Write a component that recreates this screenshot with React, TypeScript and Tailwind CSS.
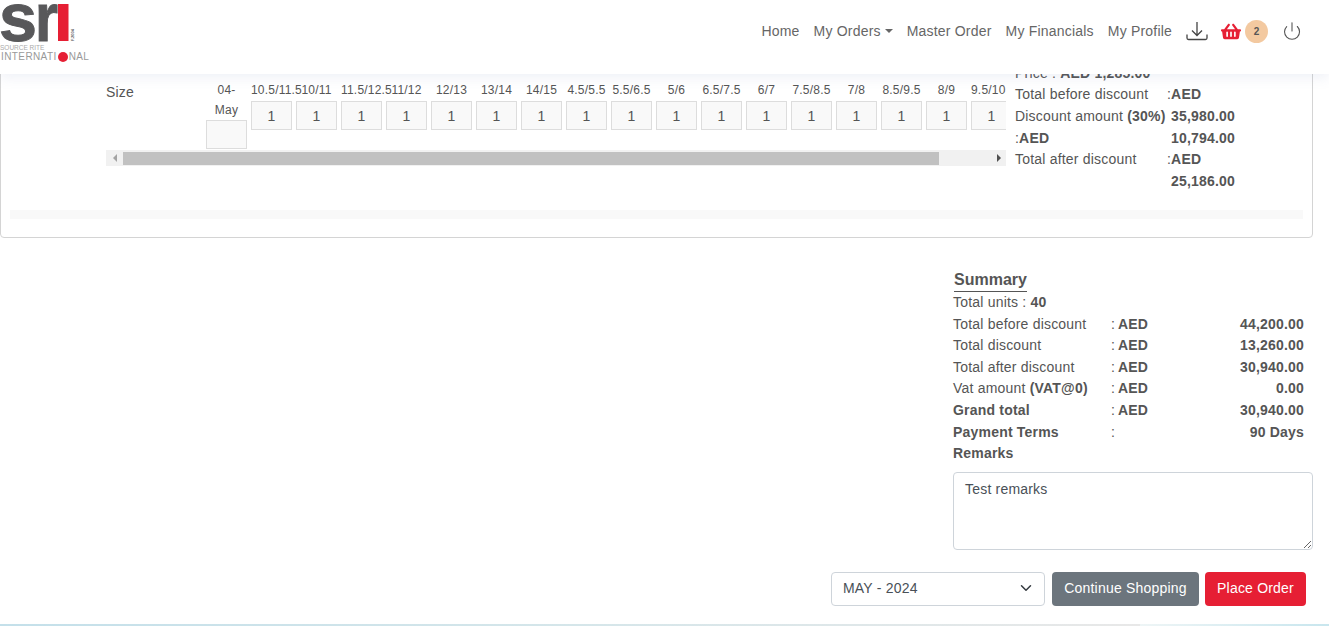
import React from "react";
import { Power } from "lucide-react";
import { FaShoppingBasket } from "react-icons/fa";

const sizes = [
  "04-May",
  "10.5/11.5",
  "10/11",
  "11.5/12.5",
  "11/12",
  "12/13",
  "13/14",
  "14/15",
  "4.5/5.5",
  "5.5/6.5",
  "5/6",
  "6.5/7.5",
  "6/7",
  "7.5/8.5",
  "7/8",
  "8.5/9.5",
  "8/9",
  "9.5/10.5",
];

const summaryRows = [
  { label: "Total before discount", value: "44,200.00" },
  { label: "Total discount", value: "13,260.00" },
  { label: "Total after discount", value: "30,940.00" },
  { label: "Vat amount", extra: "(VAT@0)", value: "0.00" },
  { label: "Grand total", value: "30,940.00", bold: true },
];

const Logo = () => (
  <div className="relative w-[92px] h-[64px] mt-[-1px] self-start tracking-normal">
    <svg width="92" height="44" viewBox="0 0 92 44" className="block">
      <text
        x="-1"
        y="42"
        fontFamily="'Liberation Sans', sans-serif"
        fontWeight="700"
        fontSize="68"
        textLength="38"
        lengthAdjust="spacingAndGlyphs"
        fill="#58585a"
        stroke="#58585a"
        strokeWidth="1"
      >
        s
      </text>
      <text
        x="35"
        y="42"
        fontFamily="'Liberation Sans', sans-serif"
        fontWeight="700"
        fontSize="68"
        textLength="23"
        lengthAdjust="spacingAndGlyphs"
        fill="#58585a"
        stroke="#58585a"
        strokeWidth="1"
      >
        r
      </text>
      <rect x="58" y="5" width="10.5" height="37" fill="#e61f34" />
      <text
        x="0"
        y="0"
        transform="translate(73.5 42) rotate(-90)"
        fontFamily="'Liberation Sans', sans-serif"
        fontWeight="700"
        fontSize="4"
        fill="#58585a"
      >
        F.2004
      </text>
    </svg>
    <div className="absolute left-0 top-[45px] text-[6.5px] leading-[8px] text-[#aaa] whitespace-nowrap">SOURCE RITE</div>
    <div className="absolute left-[1px] top-[52px] flex items-center text-[10px] leading-[12px] tracking-[0.4px] text-[#999] whitespace-nowrap">
      INTERNATI
      <span className="w-[10px] h-[10px] rounded-full bg-[#e61f34] mx-[1px]" />
      NAL
    </div>
  </div>
);

const NavBar = () => (
  <header className="relative z-10 h-[74px] bg-white flex items-center justify-between pr-[27px] shadow-[0_4px_12px_rgba(120,140,190,0.12)]">
    <Logo />
    <nav className="flex items-center text-[14px] text-[#666] -mt-[12px]">
      <a className="mr-[14px]">Home</a>
      <a className="mr-[14px] flex items-center">
        My Orders
        <span className="ml-[4px] w-0 h-0 border-x-[4px] border-t-[4px] border-x-transparent border-t-[#666]" />
      </a>
      <a className="mr-[14px]">Master Order</a>
      <a className="mr-[14px]">My Financials</a>
      <a className="mr-[14px]">My Profile</a>
      <svg width="22" height="20" viewBox="0 0 22 20" fill="none" stroke="#444" strokeWidth="1.3" className="mr-[13px]">
        <path d="M11 1v13M6 9.5l5 5 5-5" />
        <path d="M1 13.5v3.5a1.5 1.5 0 0 0 1.5 1.5h17a1.5 1.5 0 0 0 1.5-1.5v-3.5" />
      </svg>
      <FaShoppingBasket className="w-[20px] h-[19px] text-[#e61f34]" />
      <span className="ml-[4px] w-[23px] h-[23px] rounded-full bg-[#f3c9a0] text-[#555] text-[10px] font-bold flex items-center justify-center tracking-normal">
        2
      </span>
      <Power className="ml-[14px] w-[20px] h-[20px] text-[#555]" strokeWidth={1.3} />
    </nav>
  </header>
);

const SizeColumn = ({ size }: { size: string }) => (
  <div className="w-[41px] shrink-0 text-center text-[12px] leading-[19px]">
    {size === "04-May" ? (
      <div className="h-[38px]">
        04-
        <div className="pt-[1px]">May</div>
      </div>
    ) : (
      <div className="whitespace-nowrap">{size}</div>
    )}
    <input
      defaultValue={size === "04-May" ? "" : "1"}
      className="block w-[41px] h-[29px] mt-[1px] border border-[#ddd] bg-[#f9f9f9] text-center text-[14px] text-[#555]"
    />
  </div>
);

const FakeScrollbar = () => (
  <div className="h-[16px] bg-[#f1f1f1] flex items-center">
    <div className="w-[17px] flex justify-center">
      <span className="w-0 h-0 border-y-[4px] border-r-[4px] border-y-transparent border-r-[#a3a3a3]" />
    </div>
    <div className="w-[816px] h-[13px] bg-[#c1c1c1]" />
    <div className="flex-1 flex justify-end pr-[5px]">
      <span className="w-0 h-0 border-y-[4px] border-l-[4px] border-y-transparent border-l-[#505050]" />
    </div>
  </div>
);

const OrderTotals = () => (
  <div className="w-[290px] pl-[9px] leading-[21.6px] -mt-[18.4px] grid grid-cols-[152px_1fr]">
    <div className="col-span-2">
      Price : <b>AED 1,285.00</b>
    </div>
    <div>Total before discount</div>
    <div>
      :<b>AED</b>
    </div>
    <div className="whitespace-nowrap">
      Discount amount <b>(30%)</b>
    </div>
    <div className="pl-[4px]">
      <b>35,980.00</b>
    </div>
    <div className="h-[21.6px] leading-[23.6px]">
      :<b>AED</b>
    </div>
    <div className="h-[21.6px] leading-[23.6px] pl-[4px]">
      <b>10,794.00</b>
    </div>
    <div>Total after discount</div>
    <div>
      :<b>AED</b>
    </div>
    <div />
    <div className="pl-[4px]">
      <b>25,186.00</b>
    </div>
  </div>
);

const OrderCard = () => (
  <section className="relative -mt-[14px] w-[1313px] h-[178px] border border-[#d4d4d4] rounded-[4px] bg-white">
    <div className="flex pt-[20px] pl-[105px]">
      <div className="w-[900px] shrink-0">
        <div className="flex h-[69px]">
          <div className="w-[100px] shrink-0 leading-[21px] pt-[1px]">Size</div>
          <div className="flex gap-[4px] overflow-hidden">
            {sizes.map((s) => (
              <SizeColumn key={s} size={s} />
            ))}
          </div>
        </div>
        <FakeScrollbar />
      </div>
      <OrderTotals />
    </div>
    <div className="absolute left-[9px] right-[9px] top-[149px] h-[9px] bg-[#f9f9f9]" />
  </section>
);

const Summary = () => (
  <div className="ml-auto mr-[16px] mt-[31px] w-[360px] leading-[21.6px]">
    <div className="pl-[1px] h-[23px]">
      <h2 className="inline-block text-[16px] tracking-normal font-bold leading-[21px] pb-[1px] border-b border-[#555]">Summary</h2>
    </div>
    <div className="h-[21.6px] leading-[20px]">
      Total units : <b>40</b>
    </div>
    {summaryRows.map((row) => (
      <div key={row.label} className={`flex pr-[9px] h-[21.6px] ${row.bold ? "leading-[20px]" : ""}`}>
        <div className={`w-[158px] ${row.bold ? "font-bold" : ""}`}>
          {row.label} {row.extra && <b>{row.extra}</b>}
        </div>
        <div className="w-[7px]">:</div>
        <b>AED</b>
        <b className="ml-auto">{row.value}</b>
      </div>
    ))}
    <div className="flex pr-[9px]">
      <b className="w-[158px]">Payment Terms</b>
      <div>:</div>
      <b className="ml-auto">90 Days</b>
    </div>
    <b>Remarks</b>
    <textarea
      defaultValue="Test remarks"
      className="block w-[360px] h-[78px] mt-[7.2px] px-[11px] py-[6px] border border-[#ced4da] rounded-[4px] text-[14px] leading-[21px] text-[#495057]"
    />
  </div>
);

const Actions = () => (
  <div className="flex justify-end gap-[7px] pr-[23px] mt-[22px]">
    <div className="relative">
      <select
        defaultValue="may"
        className="appearance-none block w-[214px] h-[34px] pl-[11px] pb-[1px] border border-[#ced4da] rounded-[4px] bg-white text-[14px] text-[#495057]"
      >
        <option value="may">MAY - 2024</option>
      </select>
      <svg width="12" height="12" viewBox="0 0 16 16" fill="none" stroke="#343a40" strokeWidth="2" className="absolute right-[13px] top-[10px]">
        <path d="M2 5l6 6 6-6" strokeLinecap="round" strokeLinejoin="round" />
      </svg>
    </div>
    <button className="h-[34px] w-[147px] pb-[1px] rounded-[4px] bg-[#6c757d] text-white text-[14px]">Continue Shopping</button>
    <button className="h-[34px] w-[101px] pb-[1px] -ml-[1px] rounded-[4px] bg-[#e61f34] text-white text-[14px]">Place Order</button>
  </div>
);

const FooterLine = () => (
  <div className="absolute left-0 right-0 bottom-0 h-[2px] flex">
    <div className="w-[1140px] bg-gradient-to-r from-[#c4e0ea] via-[#d5e6ea] to-[#e8e8e8]" />
    <div className="flex-1 bg-gradient-to-r from-[#eef5f6] to-[#c8e6ee]" />
  </div>
);

export default function App() {
  return (
    <div className="relative h-[626px] overflow-hidden bg-white text-[14px] tracking-[0.2px] text-[#555] font-['Liberation_Sans',Arial,sans-serif]">
      <NavBar />
      <OrderCard />
      <Summary />
      <Actions />
      <FooterLine />
    </div>
  );
}
